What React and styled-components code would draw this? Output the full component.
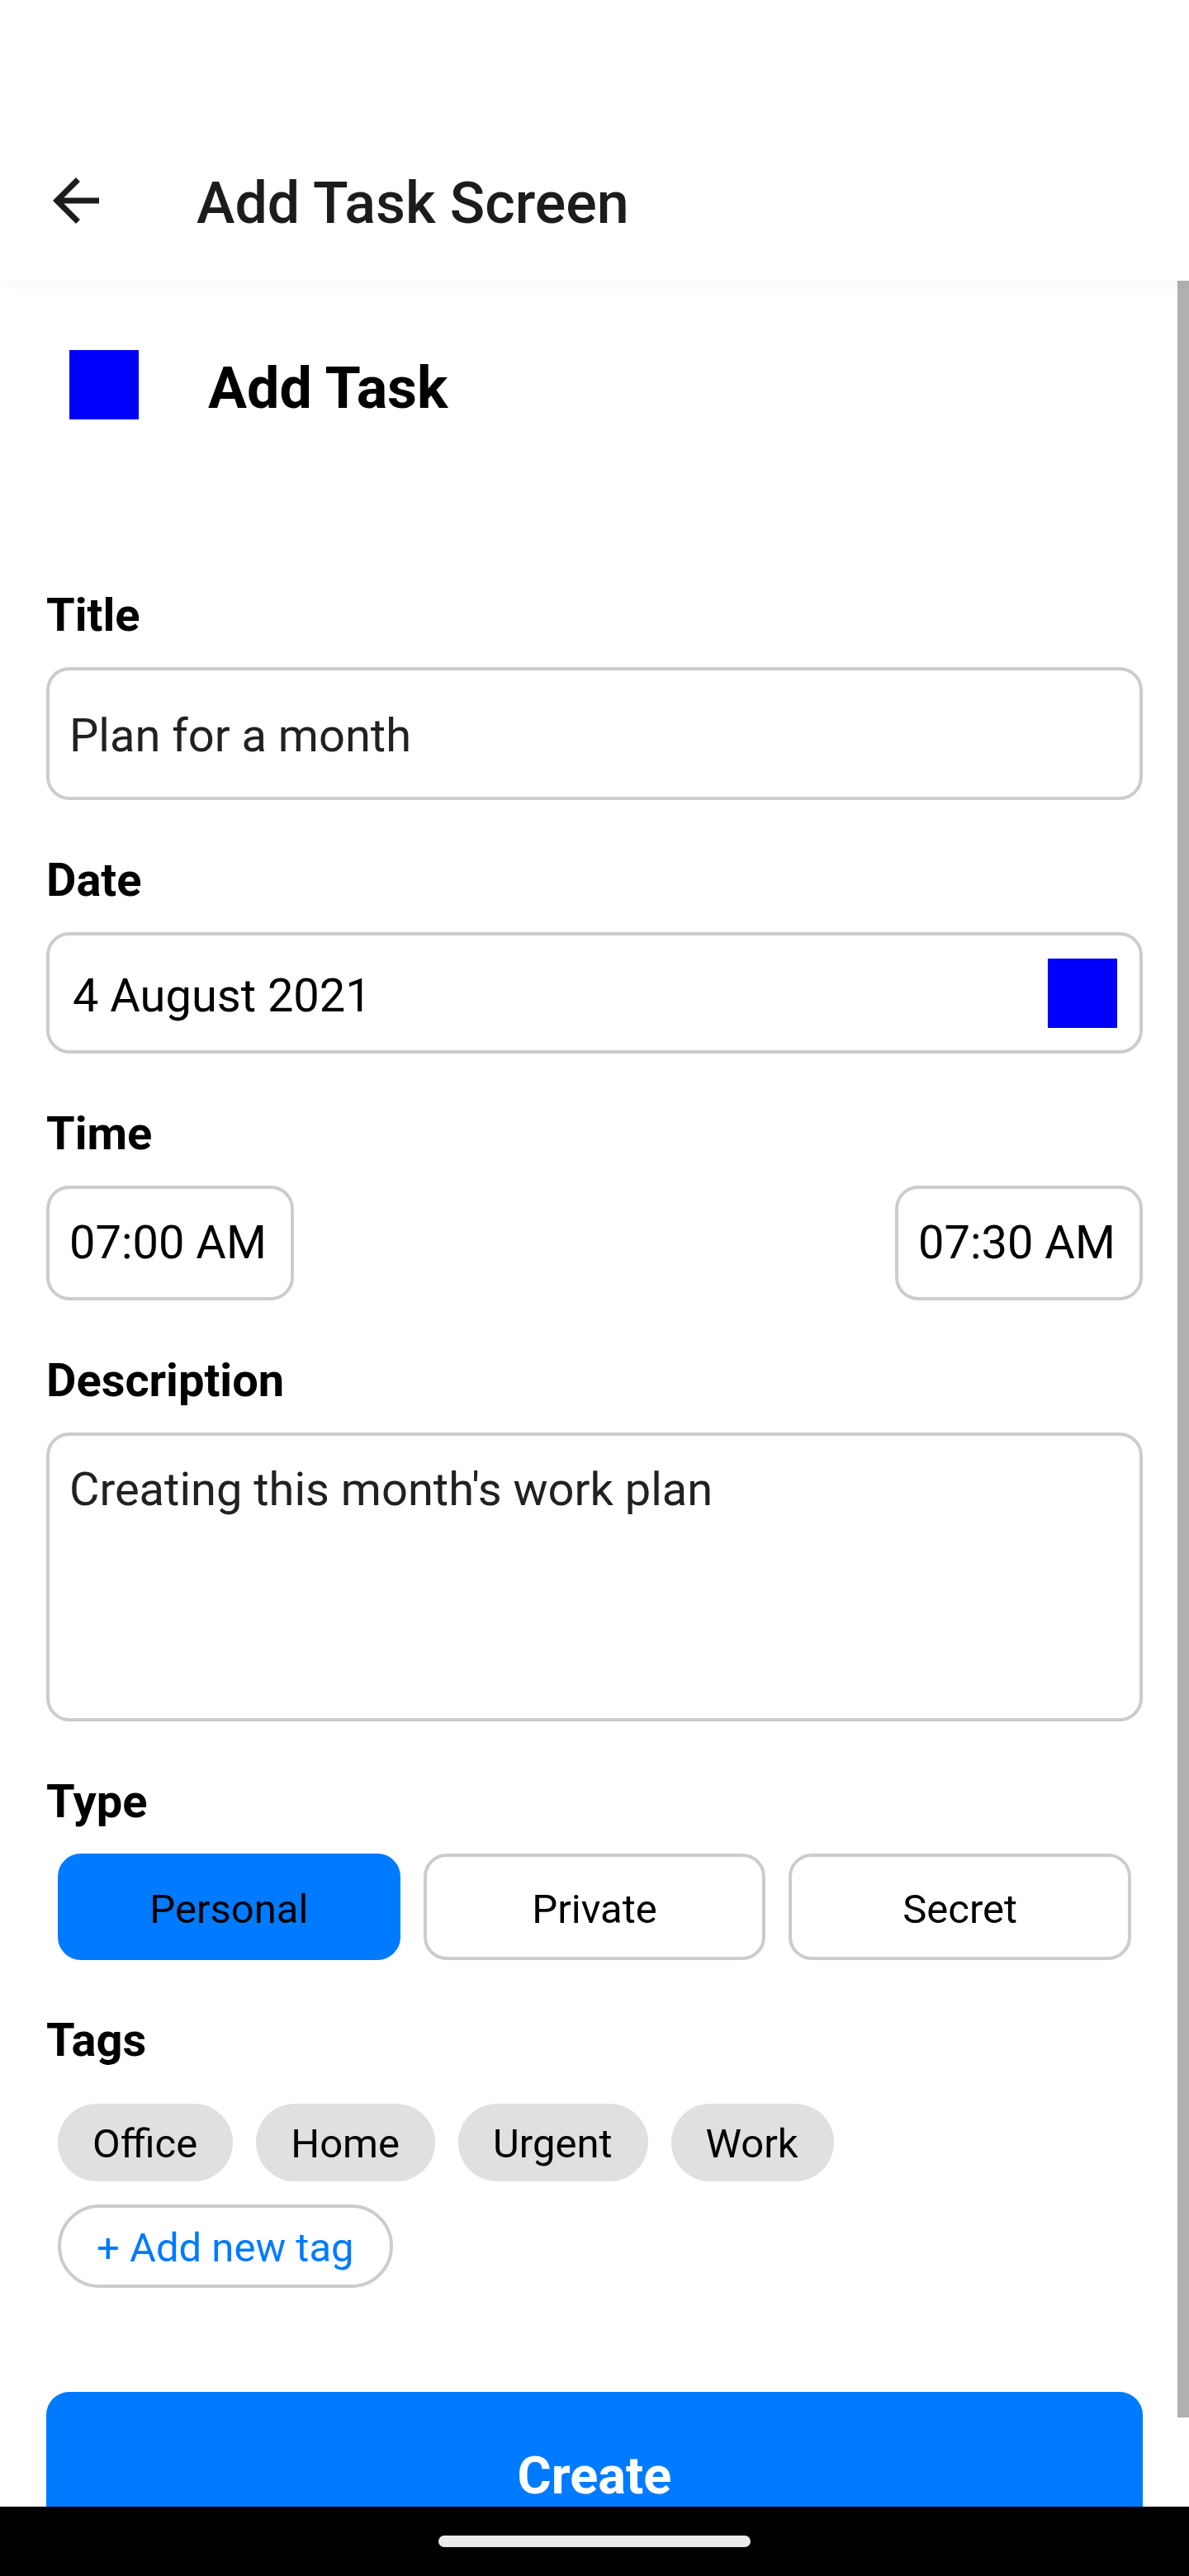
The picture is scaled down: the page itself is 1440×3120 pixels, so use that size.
import React, { useState } from "react";
import styled, { createGlobalStyle } from "styled-components";

const GlobalStyle = createGlobalStyle`
  *, *::before, *::after { box-sizing: border-box; }
  body { margin: 0; background: #fff; }
  body, button, input, textarea { font-family: Roboto, "Noto Sans", sans-serif; }
`;

const blue = "#007bff";
const line = "#ccc";

const Screen = styled.div`
  display: flex;
  flex-direction: column;
  height: 100vh;
  background: #fff;
  color: #000;
`;

const AppBar = styled.header`
  display: flex;
  align-items: center;
  gap: 104px;
  flex: none;
  padding: 200px 50px 54px;
  z-index: 1;
  background: #fff;
  box-shadow: 0 4px 16px rgba(0, 0, 0, 0.03);
`;

const BackButton = styled.button`
  display: block;
  width: 84px;
  height: 86px;
  padding: 0;
  border: 0;
  background: none;
  color: #1c1c1e;

  svg {
    display: block;
    width: 84px;
    height: 84px;
  }
`;

const ScreenTitle = styled.h1`
  margin: 0;
  padding-top: 6px;
  font-size: 70px;
  line-height: 80px;
  font-weight: 500;
  color: #1c1c1e;
`;

const Body = styled.div`
  position: relative;
  display: flex;
  flex: 1;
  min-height: 0;
`;

const Scroller = styled.main`
  flex: 1;
  min-width: 0;
  overflow-y: auto;
  scrollbar-width: none;
`;

const ScrollThumb = styled.div`
  position: absolute;
  top: 0;
  right: 0;
  width: 14px;
  height: 96%;
  background: #b0b0b0;
`;

const Heading = styled.div`
  display: flex;
  align-items: center;
  gap: 84px;
  padding: 84px 84px 0;
`;

const Square = styled.span`
  flex: none;
  width: 84px;
  height: 84px;
  background: #00f;
`;

const HeadingText = styled.h2`
  margin: 0;
  padding-top: 8px;
  font-size: 70px;
  line-height: 76px;
  font-weight: 700;
`;

const Form = styled.form`
  display: flex;
  flex-direction: column;
  gap: 64px;
  padding: 204px 56px 56px;
`;

const Field = styled.div`
  display: flex;
  flex-direction: column;
  gap: 30px;
`;

const Label = styled.label`
  font-size: 56px;
  line-height: 66px;
  font-weight: 700;
`;

const TextInput = styled.input`
  width: 100%;
  height: 161px;
  padding: 4px 24px 0;
  border: 4px solid ${line};
  border-radius: 28px;
  background: #fff;
  font-size: 56px;
  color: #212121;
  outline: none;
`;

const TextArea = styled.textarea`
  display: block;
  width: 100%;
  height: 350px;
  padding: 32px 24px;
  border: 4px solid ${line};
  border-radius: 28px;
  background: #fff;
  font-size: 56px;
  line-height: 66px;
  color: #212121;
  resize: none;
  outline: none;
`;

const DateBox = styled.div`
  display: flex;
  align-items: center;
  padding: 28px 27px 27px 28px;
  border: 4px solid ${line};
  border-radius: 28px;
`;

const DateInput = styled.input`
  flex: 1;
  min-width: 0;
  height: 84px;
  padding: 6px 0 0;
  border: 0;
  background: none;
  font-size: 56px;
  color: #000;
  outline: none;
`;

const DateButton = styled.button`
  flex: none;
  width: 84px;
  height: 84px;
  padding: 0;
  border: 0;
  background: #00f;
`;

const TimeRow = styled.div`
  display: flex;
  justify-content: space-between;
`;

const TimeInput = styled.input`
  width: 300px;
  height: 139px;
  padding: 0 24px 2px;
  border: 4px solid ${line};
  border-radius: 28px;
  background: #fff;
  font-size: 56px;
  color: #000;
  outline: none;
`;

const TypeRow = styled.div`
  display: grid;
  grid-template-columns: repeat(3, 1fr);
  gap: 28px;
  padding: 0 14px;
`;

const TypeButton = styled.button`
  height: 129px;
  padding: 6px 0 0;
  border: 4px solid ${(p) => (p.$active ? blue : line)};
  border-radius: 28px;
  background: ${(p) => (p.$active ? blue : "#fff")};
  font-size: 49px;
  color: #000;
`;

const Tags = styled.ul`
  display: flex;
  flex-wrap: wrap;
  gap: 28px;
  margin: 0;
  padding: 14px 14px 0;
  list-style: none;
`;

const Tag = styled.li`
  padding: 20px 43px 16px 42px;
  border-radius: 47px;
  background: #e0e0e0;
  font-size: 49px;
  line-height: 58px;
`;

const TagBreak = styled.li`
  width: 100%;
`;

const AddTag = styled.button`
  display: block;
  padding: 20px 43px 15px;
  border: 4px solid ${line};
  border-radius: 51px;
  background: #fff;
  font-size: 49px;
  line-height: 58px;
  color: ${blue};
`;

const CreateButton = styled.button`
  height: 197px;
  margin-top: 62px;
  padding: 6px 0 0;
  border: 0;
  border-radius: 28px;
  background: ${blue};
  font-size: 63px;
  font-weight: 700;
  color: #fff;
`;

const NavBar = styled.footer`
  display: flex;
  flex: none;
  align-items: center;
  justify-content: center;
  height: 84px;
  background: #000;
`;

const NavHandle = styled.div`
  width: 378px;
  height: 14px;
  border-radius: 7px;
  background: #ebebeb;
`;

const types = ["Personal", "Private", "Secret"];
const tags = ["Office", "Home", "Urgent", "Work"];

export default function App() {
  const [type, setType] = useState("Personal");

  return (
    <Screen>
      <GlobalStyle />
      <AppBar>
        <BackButton type="button" aria-label="Go back">
          <svg viewBox="0 0 24 24" fill="currentColor" aria-hidden="true">
            <path d="M20 11H7.83l5.59-5.59L12 4l-8 8 8 8 1.41-1.41L7.83 13H20v-2z" />
          </svg>
        </BackButton>
        <ScreenTitle>Add Task Screen</ScreenTitle>
      </AppBar>

      <Body>
        <Scroller>
          <Heading>
            <Square />
            <HeadingText>Add Task</HeadingText>
          </Heading>

          <Form onSubmit={(e) => e.preventDefault()}>
            <Field>
              <Label htmlFor="title">Title</Label>
              <TextInput id="title" type="text" defaultValue="Plan for a month" />
            </Field>

            <Field>
              <Label htmlFor="date">Date</Label>
              <DateBox>
                <DateInput id="date" type="text" defaultValue="4 August 2021" />
                <DateButton type="button" aria-label="Choose date" />
              </DateBox>
            </Field>

            <Field>
              <Label htmlFor="start">Time</Label>
              <TimeRow>
                <TimeInput id="start" type="text" defaultValue="07:00 AM" />
                <TimeInput type="text" aria-label="End time" defaultValue="07:30 AM" />
              </TimeRow>
            </Field>

            <Field>
              <Label htmlFor="description">Description</Label>
              <TextArea
                id="description"
                spellCheck={false}
                defaultValue="Creating this month's work plan"
              />
            </Field>

            <Field>
              <Label as="span" id="type-label">Type</Label>
              <TypeRow role="group" aria-labelledby="type-label">
                {types.map((name) => (
                  <TypeButton
                    key={name}
                    type="button"
                    $active={name === type}
                    aria-pressed={name === type}
                    onClick={() => setType(name)}
                  >
                    {name}
                  </TypeButton>
                ))}
              </TypeRow>
            </Field>

            <Field>
              <Label as="span" id="tags-label">Tags</Label>
              <Tags aria-labelledby="tags-label">
                {tags.map((name) => (
                  <Tag key={name}>{name}</Tag>
                ))}
                <TagBreak>
                  <AddTag type="button">+ Add new tag</AddTag>
                </TagBreak>
              </Tags>
            </Field>

            <CreateButton type="submit">Create</CreateButton>
          </Form>
        </Scroller>
        <ScrollThumb />
      </Body>

      <NavBar>
        <NavHandle />
      </NavBar>
    </Screen>
  );
}
